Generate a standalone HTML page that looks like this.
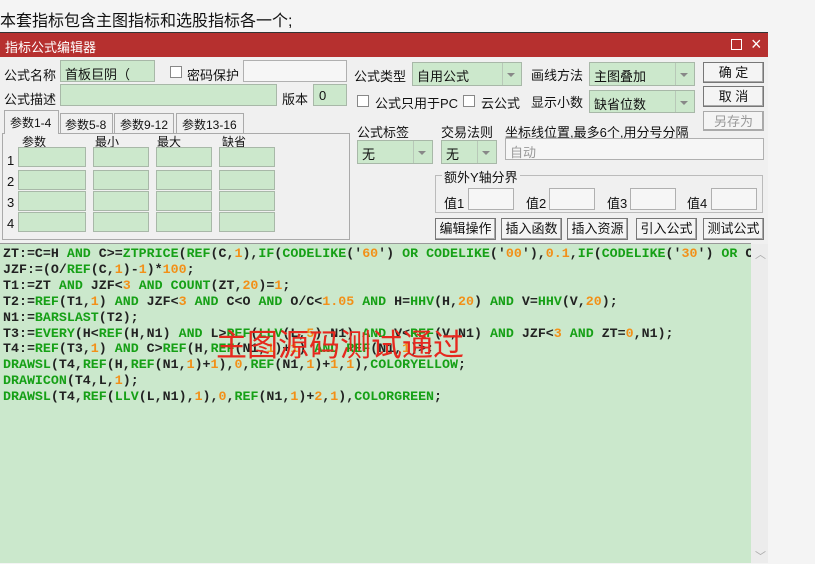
<!DOCTYPE html>
<html><head><meta charset="utf-8"><style>
*{margin:0;padding:0;box-sizing:border-box}
body{width:815px;height:563px;overflow:hidden;background:#f4f4f4;font-family:"Liberation Sans","Noto Sans CJK SC",sans-serif;font-size:12px;color:#111;position:relative}
.a{position:absolute;white-space:nowrap}
.in{position:absolute;background:#cce8cc;border:1px solid #a8b8a8}
.wh{position:absolute;background:#f6f6f6;border:1px solid #b0b0b0}
.dd{position:absolute;background:#cce8cc;border:1px solid #a8b8a8;padding:3px 4px;font-size:13px}
.dd:after{content:"";position:absolute;right:0;top:0;bottom:0;width:18px;border-left:1px solid #b8c8b8;background:#cce8cc}
.dd i{position:absolute;right:6px;top:10px;border-left:4px solid transparent;border-right:4px solid transparent;border-top:4px solid #888;z-index:2}
.btn{position:absolute;background:#f4f4f4;border:1px solid #777;box-shadow:inset -1px -1px 0 #aaa;text-align:center;font-size:13px;line-height:20px}
.cb{position:absolute;width:12px;height:12px;border:1px solid #888;background:#fff}
.code{position:absolute;left:0;top:243px;width:751px;height:320px;background:#cbe8cc;border-top:1px solid #999;font-family:"Liberation Mono",monospace;font-weight:bold;font-size:13.3px;line-height:15.9px;padding:2px 0 0 3px;color:#222;white-space:pre;overflow:hidden}
.g{color:#16a016}.o{color:#f29018}
</style></head><body>
<div class="a" style="left:0;top:7px;font-size:16px">本套指标包含主图指标和选股指标各一个;</div>
<div class="a" style="left:0;top:32px;width:768px;height:531px;background:#f0f0f0;border-top:1px solid #333"></div>
<div class="a" style="left:0;top:33px;width:768px;height:24px;background:#b6302f;color:#fff;font-size:13px;padding:4px 0 0 5px">指标公式编辑器</div>
<div class="a" style="left:731px;top:39px;width:11px;height:11px;border:1px solid #fff"></div>
<div class="a" style="left:751px;top:34px;color:#fff;font-size:18px">×</div>

<div class="a" style="left:4px;top:65px;font-size:13px">公式名称</div>
<div class="in" style="left:60px;top:60px;width:95px;height:22px;padding:3px 4px;font-size:13px">首板巨阴（</div>
<div class="cb" style="left:170px;top:66px"></div>
<div class="a" style="left:187px;top:65px;font-size:13px">密码保护</div>
<div class="wh" style="left:243px;top:60px;width:104px;height:22px"></div>
<div class="a" style="left:4px;top:89px;font-size:13px">公式描述</div>
<div class="in" style="left:60px;top:84px;width:217px;height:22px"></div>
<div class="a" style="left:282px;top:89px;font-size:13px">版本</div>
<div class="in" style="left:313px;top:84px;width:34px;height:22px;padding:3px 5px;font-size:13px">0</div>

<div class="a" style="left:2px;top:133px;width:348px;height:107px;border:1px solid #aaa;background:#f0f0f0"></div>
<div class="a" style="left:4px;top:110px;width:55px;height:24px;border:1px solid #aaa;border-bottom:none;background:#f0f0f0;padding:3px 0 0 5px;font-size:12px">参数1-4</div>
<div class="a" style="left:60px;top:113px;width:53px;height:20px;border:1px solid #aaa;border-bottom:none;padding:2px 0 0 4px">参数5-8</div>
<div class="a" style="left:114px;top:113px;width:60px;height:20px;border:1px solid #aaa;border-bottom:none;padding:2px 0 0 5px">参数9-12</div>
<div class="a" style="left:176px;top:113px;width:68px;height:20px;border:1px solid #aaa;border-bottom:none;padding:2px 0 0 5px">参数13-16</div>
<div class="a" style="left:22px;top:133px">参数</div><div class="a" style="left:95px;top:133px">最小</div><div class="a" style="left:157px;top:133px">最大</div><div class="a" style="left:222px;top:133px">缺省</div>
<div class="a" style="left:7px;top:150px;font-size:13px;line-height:21px">1<br>2<br>3<br>4</div>
<div class="in" style="left:18px;top:147px;width:68px;height:20px"></div><div class="in" style="left:93px;top:147px;width:56px;height:20px"></div><div class="in" style="left:156px;top:147px;width:56px;height:20px"></div><div class="in" style="left:219px;top:147px;width:56px;height:20px"></div>
<div class="in" style="left:18px;top:170px;width:68px;height:20px"></div><div class="in" style="left:93px;top:170px;width:56px;height:20px"></div><div class="in" style="left:156px;top:170px;width:56px;height:20px"></div><div class="in" style="left:219px;top:170px;width:56px;height:20px"></div>
<div class="in" style="left:18px;top:191px;width:68px;height:20px"></div><div class="in" style="left:93px;top:191px;width:56px;height:20px"></div><div class="in" style="left:156px;top:191px;width:56px;height:20px"></div><div class="in" style="left:219px;top:191px;width:56px;height:20px"></div>
<div class="in" style="left:18px;top:212px;width:68px;height:20px"></div><div class="in" style="left:93px;top:212px;width:56px;height:20px"></div><div class="in" style="left:156px;top:212px;width:56px;height:20px"></div><div class="in" style="left:219px;top:212px;width:56px;height:20px"></div>

<div class="a" style="left:354px;top:66px;font-size:13px">公式类型</div>
<div class="dd" style="left:412px;top:62px;width:110px;height:24px">自用公式<i></i></div>
<div class="a" style="left:531px;top:65px;font-size:13px">画线方法</div>
<div class="dd" style="left:589px;top:62px;width:106px;height:24px">主图叠加<i></i></div>
<div class="btn" style="left:703px;top:62px;width:61px;height:21px">确 定</div>
<div class="btn" style="left:703px;top:86px;width:61px;height:21px">取 消</div>
<div class="btn" style="left:703px;top:111px;width:61px;height:20px;color:#999;border-color:#aaa">另存为</div>
<div class="cb" style="left:357px;top:95px"></div>
<div class="a" style="left:375px;top:93px;font-size:13px">公式只用于PC</div>
<div class="cb" style="left:463px;top:95px"></div>
<div class="a" style="left:481px;top:93px;font-size:13px">云公式</div>
<div class="a" style="left:531px;top:92px;font-size:13px">显示小数</div>
<div class="dd" style="left:589px;top:90px;width:106px;height:23px">缺省位数<i></i></div>

<div class="a" style="left:357px;top:122px;font-size:13px">公式标签</div>
<div class="dd" style="left:357px;top:140px;width:76px;height:24px">无<i></i></div>
<div class="a" style="left:441px;top:122px;font-size:13px">交易法则</div>
<div class="dd" style="left:441px;top:140px;width:56px;height:24px">无<i></i></div>
<div class="a" style="left:505px;top:122px;font-size:13px">坐标线位置,最多6个,用分号分隔</div>
<div class="wh" style="left:505px;top:138px;width:259px;height:22px;padding:3px 4px;color:#999;font-size:13px">自动</div>
<div class="a" style="left:435px;top:175px;width:328px;height:38px;border:1px solid #bbb"></div>
<div class="a" style="left:442px;top:167px;background:#f0f0f0;padding:0 2px;font-size:13px">额外Y轴分界</div>
<div class="a" style="left:444px;top:193px;font-size:13px">值1</div><div class="wh" style="left:468px;top:188px;width:46px;height:22px"></div>
<div class="a" style="left:526px;top:193px;font-size:13px">值2</div><div class="wh" style="left:549px;top:188px;width:46px;height:22px"></div>
<div class="a" style="left:607px;top:193px;font-size:13px">值3</div><div class="wh" style="left:630px;top:188px;width:46px;height:22px"></div>
<div class="a" style="left:687px;top:193px;font-size:13px">值4</div><div class="wh" style="left:711px;top:188px;width:46px;height:22px"></div>
<div class="btn" style="left:435px;top:218px;width:61px;height:22px">编辑操作</div>
<div class="btn" style="left:501px;top:218px;width:61px;height:22px">插入函数</div>
<div class="btn" style="left:567px;top:218px;width:61px;height:22px">插入资源</div>
<div class="btn" style="left:636px;top:218px;width:61px;height:22px">引入公式</div>
<div class="btn" style="left:703px;top:218px;width:61px;height:22px">测试公式</div>

<div class="code">ZT:=C=H <span class="g">AND</span> C&gt;=<span class="g">ZTPRICE</span>(<span class="g">REF</span>(C,<span class="o">1</span>),<span class="g">IF</span>(<span class="g">CODELIKE</span>('<span class="o">60</span>') <span class="g">OR</span> <span class="g">CODELIKE</span>('<span class="o">00</span>'),<span class="o">0.1</span>,<span class="g">IF</span>(<span class="g">CODELIKE</span>('<span class="o">30</span>') <span class="g">OR</span> C
JZF:=(O/<span class="g">REF</span>(C,<span class="o">1</span>)-<span class="o">1</span>)*<span class="o">100</span>;
T1:=ZT <span class="g">AND</span> JZF&lt;<span class="o">3</span> <span class="g">AND</span> <span class="g">COUNT</span>(ZT,<span class="o">20</span>)=<span class="o">1</span>;
T2:=<span class="g">REF</span>(T1,<span class="o">1</span>) <span class="g">AND</span> JZF&lt;<span class="o">3</span> <span class="g">AND</span> C&lt;O <span class="g">AND</span> O/C&lt;<span class="o">1.05</span> <span class="g">AND</span> H=<span class="g">HHV</span>(H,<span class="o">20</span>) <span class="g">AND</span> V=<span class="g">HHV</span>(V,<span class="o">20</span>);
N1:=<span class="g">BARSLAST</span>(T2);
T3:=<span class="g">EVERY</span>(H&lt;<span class="g">REF</span>(H,N1) <span class="g">AND</span> L&gt;<span class="g">REF</span>(<span class="g">LLV</span>(L,<span class="o">5</span>),N1) <span class="g">AND</span> V&lt;<span class="g">REF</span>(V,N1) <span class="g">AND</span> JZF&lt;<span class="o">3</span> <span class="g">AND</span> ZT=<span class="o">0</span>,N1);
T4:=<span class="g">REF</span>(T3,<span class="o">1</span>) <span class="g">AND</span> C&gt;<span class="g">REF</span>(H,<span class="g">REF</span>(N1,<span class="o">1</span>)+<span class="o">1</span>) <span class="g">AND</span> <span class="g">REF</span>(N1,<span class="o">1</span>)&gt;;
<span class="g">DRAWSL</span>(T4,<span class="g">REF</span>(H,<span class="g">REF</span>(N1,<span class="o">1</span>)+<span class="o">1</span>),<span class="o">0</span>,<span class="g">REF</span>(N1,<span class="o">1</span>)+<span class="o">1</span>,<span class="o">1</span>),<span class="g">COLORYELLOW</span>;
<span class="g">DRAWICON</span>(T4,L,<span class="o">1</span>);
<span class="g">DRAWSL</span>(T4,<span class="g">REF</span>(<span class="g">LLV</span>(L,N1),<span class="o">1</span>),<span class="o">0</span>,<span class="g">REF</span>(N1,<span class="o">1</span>)+<span class="o">2</span>,<span class="o">1</span>),<span class="g">COLORGREEN</span>;</div>
<div class="a" style="left:751px;top:244px;width:17px;height:319px;background:#ececec"></div>
<div class="a" style="left:755px;top:246px;color:#aaa;font-size:11px">︿</div>
<div class="a" style="left:755px;top:548px;color:#aaa;font-size:11px">﹀</div>
<div class="a" style="left:216px;top:320px;color:#e6281e;font-size:31px;letter-spacing:0px">主图源码测试通过</div>
</body></html>
